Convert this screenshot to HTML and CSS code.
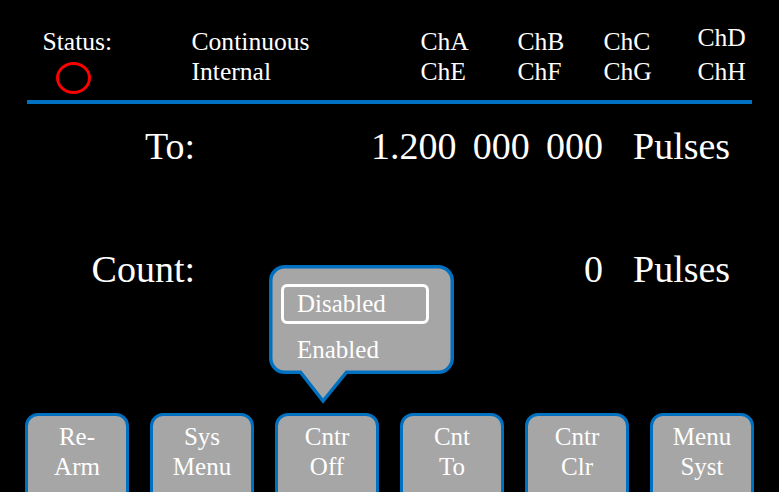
FILE: index.html
```html
<!DOCTYPE html>
<html>
<head>
<meta charset="utf-8">
<link rel="stylesheet" href="styles.css">
</head>
<body>
<div class="screen">
  <div class="status-bar">
    <div class="cell">Status:</div>
    <div class="cell">Continuous</div>
    <div class="cell">ChA</div>
    <div class="cell">ChB</div>
    <div class="cell">ChC</div>
    <div class="cell raised">ChD</div>
    <div class="cell"><div class="led"></div></div>
    <div class="cell">Internal</div>
    <div class="cell">ChE</div>
    <div class="cell">ChF</div>
    <div class="cell">ChG</div>
    <div class="cell">ChH</div>
  </div>
  <div class="rule"></div>
  <div class="readout">
    <div class="label">To:</div>
    <div class="value">1.200 000 000</div>
    <div class="unit">Pulses</div>
    <div class="label">Count:</div>
    <div class="value">0</div>
    <div class="unit">Pulses</div>
  </div>
  <div class="softkeys">
    <div class="key">Re-<br>Arm</div>
    <div class="key">Sys<br>Menu</div>
    <div class="key">Cntr<br>Off</div>
    <div class="key">Cnt<br>To</div>
    <div class="key">Cntr<br>Clr</div>
    <div class="key">Menu<br>Syst</div>
  </div>
  <div class="popup">
    <svg class="popup-shape" width="190" height="146" viewBox="0 0 190 146">
      <path d="M 17.75 3.75 H 171.25 A 14 14 0 0 1 185.25 17.75 V 95.25 A 14 14 0 0 1 171.25 109.25 H 79.5 L 56 138 L 33.5 109.25 H 17.75 A 14 14 0 0 1 3.75 95.25 V 17.75 A 14 14 0 0 1 17.75 3.75 Z" fill="#a6a6a6" stroke="#0070c0" stroke-width="3.5" stroke-linejoin="miter"/>
    </svg>
    <div class="popup-menu">
      <div class="option selected">Disabled</div>
      <div class="option">Enabled</div>
    </div>
  </div>
</div>
</body>
</html>
```

FILE: styles.css
```css
html, body {
  margin: 0;
  padding: 0;
  background: #000;
}

.screen {
  position: relative;
  width: 779px;
  height: 492px;
  overflow: hidden;
  background: #000;
  color: #fff;
  font-family: 'Liberation Serif', Tinos, 'DejaVu Serif', serif;
}

.status-bar {
  display: grid;
  grid-template-columns: 149px 229px 97px 86px 94px auto;
  grid-template-rows: 30px 30px;
  padding: 26.5px 0 0 42.5px;
  font-size: 25.6px;
  line-height: 30px;
}

.cell {
  white-space: nowrap;
}

.raised {
  margin-top: -4px;
}

.led {
  width: 35px;
  height: 32px;
  box-sizing: border-box;
  border: 3.5px solid #ff0000;
  border-radius: 50%;
  margin: 5px 0 0 13.5px;
}

.rule {
  height: 4px;
  margin: 13px 27px 0 27px;
  background: #0070c0;
}

.readout {
  display: grid;
  grid-template-columns: 195px 408px auto;
  grid-auto-rows: 42px;
  row-gap: 81px;
  margin-top: 21.2px;
  font-size: 38px;
  line-height: 42px;
}

.label {
  text-align: right;
}

.value {
  text-align: right;
  white-space: nowrap;
  word-spacing: 6.8px;
}

.unit {
  padding-left: 30px;
}

.softkeys {
  display: flex;
  gap: 21px;
  padding-left: 25px;
  margin-top: 123px;
}

.key {
  flex: none;
  width: 104px;
  height: 110px;
  box-sizing: border-box;
  border: 3.5px solid #0070c0;
  border-radius: 13px 13px 0 0;
  background: #a6a6a6;
  padding-top: 6px;
  text-align: center;
  font-size: 25px;
  line-height: 30px;
}

.popup {
  position: absolute;
  left: 267px;
  top: 263px;
  width: 190px;
  height: 146px;
}

.popup-shape {
  position: absolute;
  left: 0;
  top: 0;
  display: block;
}

.popup-menu {
  position: relative;
  padding: 21px 0 0 14px;
  font-size: 25px;
}

.option {
  padding-left: 16px;
  line-height: 30px;
  margin-top: 10.5px;
}

.option.selected {
  width: 148px;
  height: 40px;
  box-sizing: border-box;
  margin-top: 0;
  padding-left: 13px;
  border: 3px solid #fff;
  border-radius: 6px;
  line-height: 34px;
}
```
